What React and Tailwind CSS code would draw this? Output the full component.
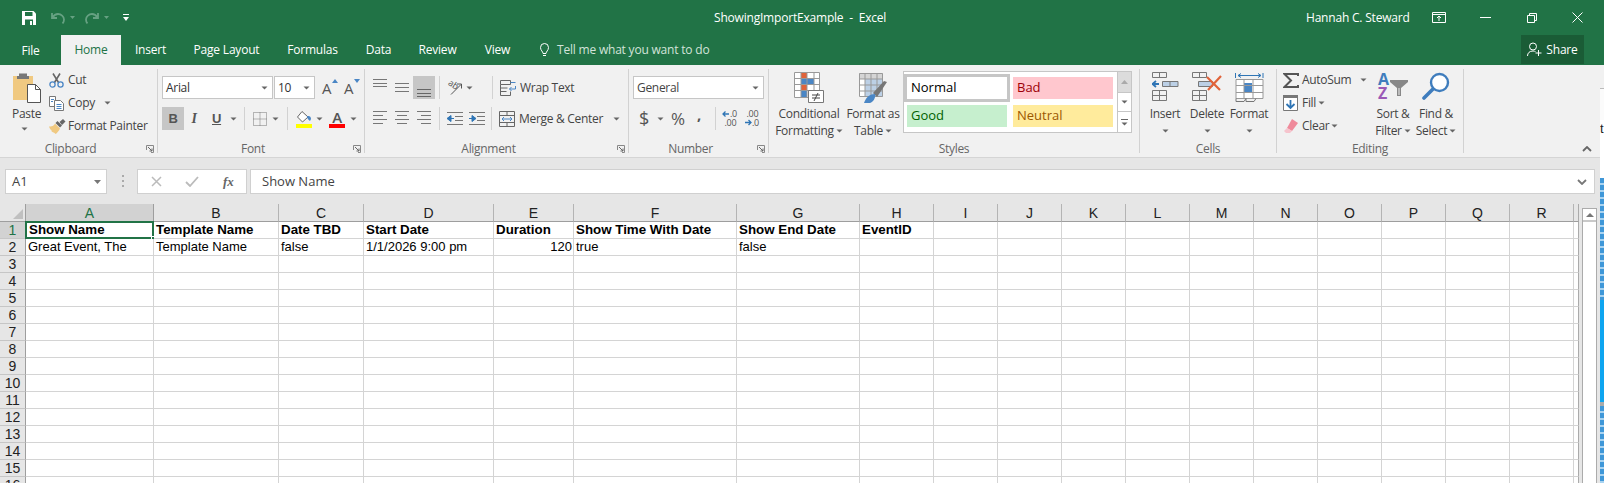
const columns = [
  ["A", "Show Name", "Great Event, The"],
  ["B", "Template Name", "Template Name"],
  ["C", "Date TBD", "false"],
  ["D", "Start Date", "1/1/2026 9:00 pm"],
  ["E", "Duration", "120"],
  ["F", "Show Time With Date", "true"],
  ["G", "Show End Date", "false"],
  ["H", "EventID", ""],
  ["I", "", ""],
  ["J", "", ""],
  ["K", "", ""],
  ["L", "", ""],
  ["M", "", ""],
  ["N", "", ""],
  ["O", "", ""],
  ["P", "", ""],
  ["Q", "", ""],
  ["R", "", ""],
];

const rows = Array.from({ length: 16 }, (_, i) => i + 1);

const tabs = [
  ["Insert", "w-[59px]"],
  ["Page Layout", "w-[93px]"],
  ["Formulas", "w-[79px]"],
  ["Data", "w-[53px]"],
  ["Review", "w-[65px]"],
  ["View", "w-[55px]"],
];

function Caret({ className = "" }) {
  return (
    <svg width="7" height="4" viewBox="0 0 7 4" className={`shrink-0 ${className}`}>
      <path d="M.5 .5h6L3.500 3.500z" fill="#666" />
    </svg>
  );
}

function Lines({ ys, x = [[0, 14]], w = 14, h = 23, color = "#777" }) {
  return (
    <svg width={w} height={h} viewBox={`0 0 ${w} ${h}`} className="shrink-0">
      {ys.map((y, i) => {
        const [a, b] = x[i % x.length];
        return <path key={i} d={`M${a} ${y + 0.5}H${b}`} stroke={color} />;
      })}
    </svg>
  );
}

function Launcher() {
  return (
    <svg width="8" height="8" viewBox="0 0 8 8" className="absolute right-[3px] bottom-[4px]">
      <path d="M.5 5V.5H7.500V7.500H5" fill="none" stroke="#888" />
      <path d="M2 2l4 4M6 3.500V6H3.500" fill="none" stroke="#666" />
    </svg>
  );
}

function Sep({ className = "h-[23px]" }) {
  return <div className={`w-px bg-[#d2d2d2] shrink-0 ${className}`} />;
}

function Group({ label, width, launcher, children }) {
  return (
    <div className={`relative flex flex-col shrink-0 ${width}`}>
      <div className="h-[76px]">{children}</div>
      <div className={`h-[16px] text-center leading-[16px] text-[#666] ${launcher ? "pr-[16px]" : ""}`}>{label}</div>
      {launcher && <Launcher />}
    </div>
  );
}

function PasteIcon() {
  return (
    <svg width="28" height="30" viewBox="0 0 28 30">
      <path d="M0 3h20v24H0z" fill="#f0c981" />
      <path d="M6 3h8V0.500h-8zM4 3h12v3H4z" fill="#777" />
      <path d="M14.500 11.500h8l5 5v13h-13z" fill="#fff" stroke="#555" />
      <path d="M22.500 11.500v5h5" fill="none" stroke="#555" />
    </svg>
  );
}

function CutIcon() {
  return (
    <svg width="15" height="15" viewBox="0 0 15 15">
      <path d="M4 0.500l5.500 9M11 0.500L5.500 9.500" stroke="#666" strokeWidth="1.600" fill="none" />
      <circle cx="3.500" cy="11.500" r="2.600" fill="none" stroke="#4a86c5" strokeWidth="1.300" />
      <circle cx="11.500" cy="11.500" r="2.600" fill="none" stroke="#4a86c5" strokeWidth="1.300" />
    </svg>
  );
}

function CopyIcon() {
  return (
    <svg width="15" height="15" viewBox="0 0 15 15">
      <path d="M.5 .5h6v10h-6z" fill="#fff" stroke="#777" />
      <path d="M5.500 4.500h6l3 3v7h-9z" fill="#fff" stroke="#777" />
      <path d="M7.500 8.500h5M7.500 10.500h5M7.500 12.500h5M2 3.500h3M2 5.500h2" stroke="#4a86c5" />
    </svg>
  );
}

function PainterIcon() {
  return (
    <svg width="17" height="15" viewBox="0 0 17 15">
      <path d="M0 7.500c3 .5 5-1 6-3l5 5c-1 2-3 5-4.500 5.500-1-1.500-1.500-1-3-2-1.500-.5-1-2-1-2-1 0-2-2-2.500-3.500z" fill="#f0c981" />
      <path d="M6.500 4l2-2 4.500 4.500-2 2zM10.500 3l3.500-3 2.500 2.500-3.500 3.500z" fill="#666" />
    </svg>
  );
}

function Small({ icon, children, className = "" }) {
  return (
    <div className={`flex items-center h-[23px] ${className}`}>
      <div className="w-[19px] shrink-0 flex items-center pt-[1px]">{icon}</div>
      {children}
    </div>
  );
}

function SizeA({ text, up }) {
  return (
    <div className="relative w-[14px] h-[23px] flex items-end">
      <span className="text-[15px] leading-[21px] text-[#555]">{text}</span>
      <svg width="6" height="4" viewBox="0 0 6 4" className="absolute right-[-2px] top-[3px]">
        <path d={up ? "M0 4h6L3 0z" : "M0 0h6L3 4z"} fill="#4a86c5" />
      </svg>
    </div>
  );
}

function BordersIcon() {
  return (
    <svg width="14" height="14" viewBox="0 0 14 14">
      <path d="M.5 .5h13v13H.5zM7 .5v13M.5 7h13" fill="none" stroke="#777" strokeDasharray="1 1" />
    </svg>
  );
}

function FillIcon() {
  return (
    <svg width="17" height="18" viewBox="0 0 17 18">
      <path d="M7 1.500L2.500 7l5 5L13 7z" fill="#fff" stroke="#666" />
      <path d="M12 6.500c2-1 4 0 4 2.500l-1 2c-1-1-3-2-3-4.500z" fill="#4a86c5" />
      <path d="M1 14h16v4H1z" fill="#ffff00" />
    </svg>
  );
}

function FontColorIcon() {
  return (
    <div className="flex flex-col items-center w-[16px]">
      <span className="text-[15px] leading-[14px] font-semibold text-[#555]">A</span>
      <div className="w-[16px] h-[4px] bg-[#ff0000]" />
    </div>
  );
}

function OrientationIcon() {
  return (
    <svg width="16" height="17" viewBox="0 0 16 17" className="overflow-visible">
      <text x="1" y="8" fontSize="9" fill="#555" fontFamily="Open Sans" transform="rotate(35 5 6)">ab</text>
      <path d="M4 15.500L14 5.500M10 5h4.500v4.500" fill="none" stroke="#555" />
    </svg>
  );
}

function WrapIcon() {
  return (
    <svg width="16" height="16" viewBox="0 0 16 16">
      <path d="M.5 .5h10v4h-10zM.5 4.500v11h10v-4M.5 8h7M.5 11.500h6" fill="none" stroke="#666" />
      <path d="M10.500 2.500h5" stroke="#4a86c5" />
      <path d="M15.500 6v3h-6M11.500 7l-2 2 2 2" fill="none" stroke="#4a86c5" />
    </svg>
  );
}

function MergeIcon() {
  return (
    <svg width="16" height="16" viewBox="0 0 16 16">
      <path d="M.5 .5h15v15H.5zM.5 4.500h15M.5 11.500h15M8 .5v4M8 11.500v4" fill="none" stroke="#666" />
      <path d="M3 8h10M5 6L3 8l2 2M11 6l2 2-2 2" fill="none" stroke="#4a86c5" />
    </svg>
  );
}

function IndentIcon({ flip }) {
  return (
    <svg width="16" height="14" viewBox="0 0 16 14">
      <path d="M0 .5h16M8 4.500h8M8 8.500h8M0 12.500h16" stroke="#777" fill="none" />
      <path d={flip ? "M0 6.500h3M3 3.500l4 3-4 3z" : "M3 6.500h4M4 3.500L0 6.500l4 3z"} stroke="#2f75b5" fill="#2f75b5" />
    </svg>
  );
}

function DecimalIcon({ top, bottom, dir }) {
  return (
    <svg width="15" height="17" viewBox="0 0 15 17" className="overflow-visible">
      <text x={top.length === 2 ? 7 : 1.500} y="7" fontSize="9" fill="#555" fontFamily="Open Sans">{top}</text>
      <text x={bottom.length === 2 ? 7 : 1.500} y="16" fontSize="9" fill="#555" fontFamily="Open Sans">{bottom}</text>
      <path d={dir === "left" ? "M0 4h6M2.500 1.500L0 4l2.500 2.500" : "M0 12.500h6M3.500 10L6 12.500 3.500 15"} fill="none" stroke="#2f75b5" strokeWidth="1.300" />
    </svg>
  );
}

function ConditionalIcon() {
  return (
    <svg width="30" height="31" viewBox="0 0 30 31">
      <path d="M0 0h26v26H0z" fill="#fff" />
      <path d="M7 0h6v6H7z M7 12h6v6H7z" fill="#e0633a" />
      <path d="M7 6h13v6H7z M7 18h6v8H7z" fill="#4a86c5" />
      <path d="M.5 .5h25v25H.5zM7 .5v25M13 .5v25M20 .5v25M.5 6.500h25M.5 12.500h25M.5 18.500h25" fill="none" stroke="#999" />
      <path d="M14.500 18.500h15v12h-15z" fill="#fff" stroke="#777" />
      <path d="M18 23h8M18 26h8M24 21l-4 8" stroke="#444" fill="none" />
    </svg>
  );
}

function TableIcon() {
  return (
    <svg width="30" height="31" viewBox="0 0 30 31">
      <path d="M1 1h24v24H1z" fill="#fff" />
      <path d="M7 7h18v18H7z" fill="#bcd0e6" />
      <path d="M1 1h24v6H1z" fill="#d5d5d5" />
      <path d="M1.500 1.500h23v23h-23zM7 1.500v23M13 1.500v23M19 1.500v23M1.500 7h23M1.500 13h23M1.500 19h23" fill="none" stroke="#999" />
      <path d="M15 21L26 9l3 1-6 9-4 6z" fill="#777" />
      <path d="M6 31c2-6 6-9 11-9 1 4-2 8-5 9z" fill="#4a86c5" />
    </svg>
  );
}

function StyleCell({ bg, color, children, extra = "" }) {
  return <div className={`h-[22px] flex items-center pl-[4px] text-[13px] ${bg} ${color} ${extra}`}>{children}</div>;
}

function InsertIcon() {
  return (
    <svg width="27" height="29" viewBox="0 0 27 29">
      <path d="M.5 .5h14v5h-14zM7.500 .5v5M.5 18.500h14v10h-14zM.5 23.500h14M7.500 18.500v10" fill="none" stroke="#777" />
      <path d="M10.500 9.500h15.500v5H10.500z" fill="#bcd0e6" stroke="#777" />
      <path d="M18 9.500v5" stroke="#777" />
      <path d="M0 12h7M4 9l-3.500 3L4 15" fill="none" stroke="#2f75b5" strokeWidth="1.800" />
    </svg>
  );
}

function DeleteIcon() {
  return (
    <svg width="31" height="29" viewBox="0 0 31 29">
      <path d="M.5 .5h14v5h-14zM7.500 .5v5M.5 18.500h14v10h-14zM.5 23.500h14M7.500 18.500v10" fill="none" stroke="#777" />
      <path d="M6.500 9.500h14v5h-14z" fill="#bcd0e6" stroke="#777" />
      <path d="M15 5l13 13M29 4L16 18" stroke="#e0633a" strokeWidth="2.200" fill="none" />
    </svg>
  );
}

function FormatIcon() {
  return (
    <svg width="29" height="31" viewBox="0 0 29 31">
      <path d="M.5 1v5M28 1v5" stroke="#2f75b5" fill="none" />
      <path d="M3 3.500h23M6 1.500l-3 2 3 2M23 1.500l3 2-3 2" stroke="#2f75b5" fill="none" />
      <path d="M1 7.500h27v19H1z" fill="#fff" />
      <path d="M9 11h8v10H9z" fill="#4a86c5" />
      <path d="M1 7.500h27v19H1zM9 7.500v19M18 7.500v19M1 13.500h27M1 20.500h27" fill="none" stroke="#999" />
      <path d="M1 26.500v3h8l2-3M11 26.500v3h8l2-3" fill="none" stroke="#777" />
    </svg>
  );
}

function SigmaIcon() {
  return (
    <svg width="16" height="15" viewBox="0 0 16 15">
      <path d="M15 3V1H1.500L8 7.500 1.500 14H15v-2" fill="none" stroke="#555" strokeWidth="2" />
    </svg>
  );
}

function DownIcon() {
  return (
    <svg width="15" height="16" viewBox="0 0 15 16">
      <path d="M.5 .5h14v15H.5z" fill="#fff" stroke="#777" />
      <path d="M0 0h15v3H0z" fill="#777" />
      <path d="M7.500 5v8M3.500 9l4 4 4-4" fill="none" stroke="#2f75b5" strokeWidth="1.800" />
    </svg>
  );
}

function EraserIcon() {
  return (
    <svg width="15" height="14" viewBox="0 0 15 14">
      <path d="M9 0l6 4-6 8-5-3z" fill="#ef8a9b" />
      <path d="M4 9l5 3-2 2H3L1 12z" fill="#f6c4cd" />
    </svg>
  );
}

function SortIcon() {
  return (
    <div className="relative w-[30px] h-[29px]">
      <span className="absolute left-0 top-0 font-bold text-[16px] leading-[14px] text-[#3f7dbd]">A</span>
      <span className="absolute left-0 top-[14px] font-bold text-[16px] leading-[14px] text-[#9b59b6]">Z</span>
      <svg width="18" height="17" viewBox="0 0 18 17" className="absolute right-0 top-[8px]">
        <path d="M0 0h18v2l-7 6v8H7V8L0 2z" fill="#888" />
        <path d="M8.500 8v7h1V8z" fill="#eee" />
      </svg>
    </div>
  );
}

function FindIcon() {
  return (
    <svg width="28" height="28" viewBox="0 0 28 28">
      <circle cx="17.500" cy="10.500" r="8.500" fill="#fff" stroke="#3f7dbd" strokeWidth="2.400" />
      <path d="M11 17L2 26" stroke="#3f7dbd" strokeWidth="3.600" strokeLinecap="round" />
    </svg>
  );
}

function BigButton({ icon, line1, line2, width, caret }) {
  return (
    <div className={`flex flex-col items-center pt-[7px] shrink-0 ${width}`}>
      <div className="h-[34px] flex items-start justify-center">{icon}</div>
      <div className="h-[17px] leading-[16px] whitespace-nowrap">{line1}</div>
      <div className="h-[16px] flex items-center gap-[2px] whitespace-nowrap leading-[16px]">
        {line2}
        {caret && <Caret />}
      </div>
    </div>
  );
}

function TitleBar() {
  return (
    <div className="h-[35px] flex items-center text-white">
      <div className="w-[714px] flex items-center pl-[22px] shrink-0">
        <svg width="14" height="14" viewBox="0 0 14 14">
          <path d="M0 0h11.500L14 2.500V14H0z" fill="#fff" />
          <path d="M3 1h7.500v4H3zM3 8.500h8V14H3z" fill="#217346" />
          <path d="M8 10h2v4H8z" fill="#fff" />
        </svg>
        <svg width="14" height="12" viewBox="0 0 14 12" className="ml-[15px]">
          <path d="M1 1v5h5M1.500 5.500C3 3 5 2 7 2c3 0 6 2.500 6 5.500 0 1.500-.5 3-1.500 4" fill="none" stroke="#66a182" strokeWidth="1.800" />
        </svg>
        <svg width="5" height="3" viewBox="0 0 5 3" className="ml-[5px]"><path d="M0 0h5L2.500 3z" fill="#66a182" /></svg>
        <svg width="14" height="12" viewBox="0 0 14 12" className="ml-[10px]">
          <path d="M13 1v5H8M12.500 5.500C11 3 9 2 7 2 4 2 1 4.500 1 7.500 1 9 1.500 10.500 2.500 11.500" fill="none" stroke="#66a182" strokeWidth="1.800" />
        </svg>
        <svg width="5" height="3" viewBox="0 0 5 3" className="ml-[5px]"><path d="M0 0h5L2.500 3z" fill="#66a182" /></svg>
        <svg width="6" height="7" viewBox="0 0 6 7" className="ml-[14px]"><path d="M0 0h6v1H0zM0 3h6L3 7z" fill="#fff" /></svg>
      </div>
      <div className="w-[592px] shrink-0 whitespace-pre">ShowingImportExample  -  Excel</div>
      <div className="w-[126px] shrink-0">Hannah C. Steward</div>
      <svg width="14" height="11" viewBox="0 0 14 11" className="shrink-0">
        <path d="M.5 .5h13v10H.5zM.5 2.500h13M7 9V4.500M5 6l2-2 2 2" fill="none" stroke="#fff" />
      </svg>
      <div className="ml-[34px] w-[11px] h-px bg-white shrink-0" />
      <svg width="10" height="10" viewBox="0 0 10 10" className="ml-[36px] shrink-0">
        <path d="M.5 2.500h7v7h-7zM2.500 2.500v-2h7v7h-2" fill="none" stroke="#fff" />
      </svg>
      <svg width="11" height="11" viewBox="0 0 11 11" className="ml-[35px] shrink-0">
        <path d="M.5 .5l10 10M10.500 .5l-10 10" stroke="#fff" fill="none" />
      </svg>
    </div>
  );
}

function TabRow() {
  return (
    <div className="h-[30px] flex items-stretch text-white">
      <div className="w-[61px] flex items-center justify-center pt-[1px]">File</div>
      <div className="w-[60px] flex items-center justify-center bg-[#f1f1f1] text-[#217346]">Home</div>
      {tabs.map(([name, width]) => (
        <div key={name} className={`flex items-center justify-center ${width}`}>{name}</div>
      ))}
      <div className="ml-[15px] flex items-center gap-[8px] text-[#d3e3da]">
        <svg width="9" height="14" viewBox="0 0 9 14">
          <path d="M3 10.500C3 8.500 .5 7.500 .5 4.500a4 4 0 0 1 8 0c0 3-2.500 4-2.500 6zM3 12.500h3" fill="none" stroke="#fff" />
        </svg>
        Tell me what you want to do
      </div>
      <div className="ml-auto mr-[20px] w-[63px] h-[29px] bg-[#1a5c36] flex items-center justify-center gap-[4px]">
        <svg width="15" height="15" viewBox="0 0 15 15">
          <circle cx="6" cy="4.500" r="3.500" fill="none" stroke="#fff" />
          <path d="M.5 14c0-3 2-5 5.500-5 1 0 2 .3 2.500.6M11.500 8v6M8.500 11h6" fill="none" stroke="#fff" />
        </svg>
        Share
      </div>
    </div>
  );
}

function Ribbon() {
  return (
    <div className="h-[93px] bg-[#f1f1f1] border-b border-[#d5d5d5] flex text-[#444] tracking-[-0.3px]">
      <Group label="Clipboard" width="w-[157px]" launcher>
        <div className="flex">
          <div className="ml-[11px] w-[31px] flex flex-col items-start pt-[8px]">
            <div className="ml-[2px]"><PasteIcon /></div>
            <div className="leading-[16px] mt-[3px] ml-[1px]">Paste</div>
            <Caret className="mt-[5px] ml-[10px]" />
          </div>
          <div className="ml-[7px] pt-[3px] flex flex-col">
            <Small icon={<CutIcon />}>Cut</Small>
            <Small icon={<CopyIcon />}>
              Copy
              <Caret className="ml-[9px]" />
            </Small>
            <Small icon={<PainterIcon />}>Format Painter</Small>
          </div>
        </div>
      </Group>
      <Sep className="h-[84px] mt-[4px]" />
      <Group label="Font" width="w-[206px]" launcher>
        <div className="pl-[4px] pt-[11px] flex flex-col gap-[8px]">
          <div className="flex items-center h-[23px]">
            <div className="w-[111px] h-[23px] bg-white border border-[#c6c6c6] flex items-center justify-between pl-[3px] pr-[4px]">
              <span className="text-[#333]">Arial</span>
              <Caret />
            </div>
            <div className="w-[41px] h-[23px] ml-px bg-white border border-[#c6c6c6] flex items-center justify-between pl-[3px] pr-[4px]">
              <span className="text-[#333]">10</span>
              <Caret />
            </div>
            <div className="ml-[7px]"><SizeA text="A" up /></div>
            <div className="ml-[8px]"><SizeA text="A" /></div>
          </div>
          <div className="flex items-center h-[23px]">
            <div className="w-[22px] h-[23px] bg-[#c6c6c6] flex items-center justify-center font-bold font-['Liberation_Sans',sans-serif] text-[13px] text-[#555]">B</div>
            <div className="w-[8px] ml-[6px] text-center italic font-['Liberation_Serif',serif] font-bold text-[14px] text-[#555]">I</div>
            <div className="w-[8px] ml-[14px] text-center underline font-bold font-['Liberation_Sans',sans-serif] text-[13px] text-[#555]">U</div>
            <Caret className="ml-[10px]" />
            <div className="ml-[7px]"><Sep /></div>
            <div className="ml-[8px]"><BordersIcon /></div>
            <Caret className="ml-[5px]" />
            <div className="ml-[8px]"><Sep /></div>
            <div className="ml-[7px]"><FillIcon /></div>
            <Caret className="ml-[4px]" />
            <div className="ml-[6px]"><FontColorIcon /></div>
            <Caret className="ml-[5px]" />
          </div>
        </div>
      </Group>
      <Sep className="h-[84px] mt-[4px]" />
      <Group label="Alignment" width="w-[263px]" launcher>
        <div className="pl-[8px] pt-[11px] flex flex-col gap-[8px]">
          <div className="flex items-center h-[23px]">
            <Lines ys={[3, 7, 10]} x={[[0, 14]]} />
            <div className="ml-[8px]"><Lines ys={[7, 11, 15]} /></div>
            <div className="ml-[4px] w-[22px] h-[23px] bg-[#c6c6c6] flex justify-center"><Lines ys={[13, 17, 20]} color="#666" /></div>
            <div className="ml-[4px]"><Sep /></div>
            <div className="ml-[7px]"><OrientationIcon /></div>
            <Caret className="ml-[3px]" />
            <div className="ml-[19px]"><Sep /></div>
            <div className="ml-[7px]"><WrapIcon /></div>
            <span className="ml-[4px]">Wrap Text</span>
          </div>
          <div className="flex items-center h-[23px]">
            <Lines ys={[4, 8, 12, 16]} x={[[0, 14], [0, 10]]} />
            <div className="ml-[8px]"><Lines ys={[4, 8, 12, 16]} x={[[0, 14], [2, 12]]} /></div>
            <div className="ml-[8px]"><Lines ys={[4, 8, 12, 16]} x={[[0, 14], [4, 14]]} /></div>
            <div className="ml-[8px]"><Sep /></div>
            <div className="ml-[7px]"><IndentIcon /></div>
            <div className="ml-[6px]"><IndentIcon flip /></div>
            <div className="ml-[6px]"><Sep /></div>
            <div className="ml-[7px]"><MergeIcon /></div>
            <span className="ml-[4px] w-[92px] whitespace-nowrap">Merge &amp; Center</span>
            <Caret className="ml-[2px]" />
          </div>
        </div>
      </Group>
      <Sep className="h-[84px] mt-[4px]" />
      <Group label="Number" width="w-[139px]" launcher>
        <div className="pl-[4px] pt-[11px] flex flex-col gap-[8px]">
          <div className="w-[131px] h-[23px] bg-white border border-[#c6c6c6] flex items-center justify-between pl-[3px] pr-[4px]">
            <span>General</span>
            <Caret />
          </div>
          <div className="flex items-center h-[23px] -ml-[4px]">
            <span className="ml-[9px] w-[12px] text-center text-[18px] text-[#555]">$</span>
            <Caret className="ml-[7px]" />
            <span className="ml-[6px] w-[16px] text-center text-[17px] text-[#555]">%</span>
            <span className="ml-[10px] w-[6px] text-center text-[15px] font-bold leading-[15px] text-[#555] -mt-[8px]">,</span>
            <div className="ml-[13px]"><Sep /></div>
            <div className="ml-[7px]"><DecimalIcon top=".0" bottom=".00" dir="left" /></div>
            <div className="ml-[7px]"><DecimalIcon top=".00" bottom=".0" dir="right" /></div>
          </div>
        </div>
      </Group>
      <Sep className="h-[84px] mt-[4px]" />
      <Group label="Styles" width="w-[370px]">
        <div className="flex">
          <div className="ml-[6px]">
            <BigButton icon={<ConditionalIcon />} line1="Conditional" line2="Formatting" caret width="w-[68px]" />
          </div>
          <div className="ml-[4px]">
            <BigButton icon={<TableIcon />} line1="Format as" line2="Table" caret width="w-[52px]" />
          </div>
          <div className="ml-[4px] mt-[6px] w-[229px] h-[62px] bg-white border border-[#c6c6c6] flex tracking-normal">
            <div className="grid grid-cols-[100px_100px] content-start gap-[6px] pl-[3px] pt-[5px]">
              <StyleCell bg="bg-white" color="text-black" extra="outline-[3px] outline-solid outline-[#c6c6c6]">Normal</StyleCell>
              <StyleCell bg="bg-[#ffc7ce]" color="text-[#9c0006]">Bad</StyleCell>
              <StyleCell bg="bg-[#c6efce]" color="text-[#006100]">Good</StyleCell>
              <StyleCell bg="bg-[#ffeb9c]" color="text-[#9c5700]">Neutral</StyleCell>
            </div>
            <div className="ml-[4px] w-[15px] flex flex-col border-l border-[#c6c6c6]">
              <div className="h-[21px] bg-[#dcdcdc] border-b border-[#c6c6c6] flex items-center justify-center">
                <svg width="7" height="4" viewBox="0 0 7 4"><path d="M0 4h7L3.500 0z" fill="#aaa" /></svg>
              </div>
              <div className="h-[19px] border-b border-[#c6c6c6] flex items-center justify-center"><Caret /></div>
              <div className="flex-1 flex flex-col items-center justify-center gap-[2px]">
                <div className="w-[7px] h-px bg-[#666]" />
                <Caret />
              </div>
            </div>
          </div>
        </div>
      </Group>
      <Sep className="h-[84px] mt-[4px]" />
      <Group label="Cells" width="w-[136px]">
        <div className="flex pl-[8px]">
          <BigButton icon={<InsertIcon />} line1="Insert" line2="" caret width="w-[34px]" />
          <BigButton icon={<DeleteIcon />} line1="Delete" line2="" caret width="w-[50px]" />
          <BigButton icon={<FormatIcon />} line1="Format" line2="" caret width="w-[34px]" />
        </div>
      </Group>
      <Sep className="h-[84px] mt-[4px]" />
      <Group label="Editing" width="w-[186px]">
        <div className="flex pl-[6px]">
          <div className="w-[92px] pt-[3px] flex flex-col shrink-0">
            <Small icon={<SigmaIcon />}>
              AutoSum
              <Caret className="ml-[9px]" />
            </Small>
            <Small icon={<DownIcon />}>
              Fill
              <Caret className="ml-[2px]" />
            </Small>
            <Small icon={<EraserIcon />}>
              Clear
              <Caret className="ml-[2px]" />
            </Small>
          </div>
          <BigButton icon={<SortIcon />} line1="Sort &" line2="Filter" caret width="w-[36px]" />
          <div className="ml-[3px]">
            <BigButton icon={<FindIcon />} line1="Find &" line2="Select" caret width="w-[44px]" />
          </div>
        </div>
      </Group>
      <Sep className="h-[84px] mt-[4px]" />
      <div className="flex-1 flex items-end justify-end pr-[8px] pb-[5px]">
        <svg width="10" height="6" viewBox="0 0 10 6">
          <path d="M1 5l4-4 4 4" fill="none" stroke="#666" strokeWidth="1.800" />
        </svg>
      </div>
    </div>
  );
}

function FormulaBar() {
  return (
    <div className="h-[46px] pt-[11px] flex items-start">
      <div className="ml-[5px] w-[102px] h-[25px] bg-white border border-[#d0d0d0] flex items-center justify-between pl-[6px] pr-[4px] text-[13px] text-[#444]">
        A1
        <svg width="7" height="4" viewBox="0 0 7 4" className="mr-[1px]"><path d="M0 0h7L3.500 4z" fill="#777" /></svg>
      </div>
      <div className="ml-[14px] w-[3px] h-[12px] mt-[6px] flex flex-col justify-between items-center">
        <div className="w-[2px] h-[2px] bg-[#aaa]" />
        <div className="w-[2px] h-[2px] bg-[#aaa]" />
        <div className="w-[2px] h-[2px] bg-[#aaa]" />
      </div>
      <div className="ml-[13px] w-[110px] h-[25px] bg-white border border-[#d0d0d0] flex items-center">
        <svg width="11" height="11" viewBox="0 0 11 11" className="ml-[13px]">
          <path d="M1 1l9 9M10 1l-9 9" stroke="#bbb" strokeWidth="1.500" />
        </svg>
        <svg width="14" height="11" viewBox="0 0 14 11" className="ml-[23px]">
          <path d="M1 6l4 4 8-9" fill="none" stroke="#bbb" strokeWidth="1.800" />
        </svg>
        <span className="ml-[24px] italic font-bold font-['Liberation_Serif',serif] text-[13px] text-[#666]">fx</span>
      </div>
      <div className="ml-[3px] w-[1345px] h-[25px] bg-white border border-[#d0d0d0] flex items-center justify-between pl-[11px] pr-[7px] text-[13px] text-[#444]">
        Show Name
        <svg width="10" height="6" viewBox="0 0 10 6">
          <path d="M1 1l4 4 4-4" fill="none" stroke="#777" strokeWidth="1.800" />
        </svg>
      </div>
    </div>
  );
}

function Sheet() {
  return (
    <div className="flex-1 flex items-start overflow-hidden font-['Liberation_Sans',Arial,sans-serif] text-[13px] text-black">
      <div className="w-[1579px] shrink-0 grid grid-cols-[26px_128px_125px_85px_130px_80px_163px_123px_74px_repeat(10,64px)_5px] grid-rows-[18px_repeat(16,17px)]">
        <div className="border-r border-b border-[#9e9e9e] bg-[#e6e6e6] relative">
          <svg width="10" height="10" viewBox="0 0 10 10" className="absolute right-[2px] bottom-[2px]">
            <path d="M10 0v10H0z" fill="#c0c0c0" />
          </svg>
        </div>
        {columns.map(([letter]) => (
          <div
            key={letter}
            className={`flex items-center justify-center border-b border-b-[#9e9e9e] text-[14px] leading-[16px] ${
              letter === "A"
                ? "bg-[#d2d2d2] text-[#217346] border-r border-r-[#9e9e9e]"
                : "text-[#222] border-r border-r-[#b4b4b4]"
            }`}
          >
            {letter}
          </div>
        ))}
        <div className="border-b border-b-[#9e9e9e] border-r border-r-[#ababab]" />
        {rows.map((row) => (
          <div key={row} className="contents">
            <div
              className={`flex items-center justify-center border-r border-r-[#9e9e9e] border-b border-b-[#c6c6c6] text-[14px] leading-[16px] ${
                row === 1 ? "bg-[#d2d2d2] text-[#217346]" : "bg-[#e6e6e6] text-[#222]"
              }`}
            >
              {row}
            </div>
            {columns.map((col, i) => {
              const text = row === 1 ? col[1] : row === 2 ? col[2] : "";
              const isSelected = row === 1 && i === 0;
              return (
                <div
                  key={col[0]}
                  className={`relative bg-white border-r border-b border-[#d4d4d4] leading-[16px] whitespace-nowrap overflow-visible ${
                    row === 1 ? "font-bold text-[13.33px]" : ""
                  } ${isSelected ? "pl-[3px]" : "pl-[2px]"} ${text === "120" ? "text-right pr-[1px]" : ""}`}
                >
                  {text}
                  {isSelected && (
                    <>
                      <div className="absolute left-[-1px] top-[-1px] w-[129px] h-[18px] border-2 border-[#217346]" />
                      <div className="absolute right-[-3px] bottom-[-3px] w-[5px] h-[5px] bg-[#217346] border border-white" />
                    </>
                  )}
                </div>
              );
            })}
            <div className="bg-white border-b border-b-[#d4d4d4] border-r border-r-[#ababab]" />
          </div>
        ))}
      </div>
      <div className="ml-[3px] mt-[4px] w-[15px] h-[300px] bg-white border border-[#ababab] shrink-0">
        <div className="h-[13px] border-b-2 border-[#c9c9c9] flex items-center justify-center">
          <svg width="8" height="4" viewBox="0 0 8 4"><path d="M0 4h8L4 0z" fill="#777" /></svg>
        </div>
      </div>
    </div>
  );
}

function EdgeStrip() {
  return (
    <div className="w-[4px] shrink-0 flex flex-col overflow-hidden bg-white">
      <div className="h-[23px] bg-[#f1f1f1]" />
      <div className="h-[32px] bg-[#fbfbfb] border-t border-[#bbb]" />
      <div className="h-[25px] text-[13px] leading-[16px] pt-[1px] text-[#222] font-['Liberation_Sans',sans-serif]">t</div>
      <div className="h-[33px] bg-white" />
      <div className="h-[122px] bg-[repeating-linear-gradient(180deg,#3f97d8_0px,#3f97d8_5px,#a9d3f0_5px,#a9d3f0_7px)]" />
      <div className="h-[102px] bg-[#0ea5f0]" />
      <div className="h-[4px] bg-[#aaa]" />
      <div className="flex-1 bg-[repeating-linear-gradient(180deg,#3f97d8_0px,#3f97d8_5px,#a9d3f0_5px,#a9d3f0_7px)]" />
    </div>
  );
}

export default function App() {
  return (
    <div className="w-[1604px] h-[483px] overflow-hidden flex flex-col bg-[#217346] font-['Open_Sans',sans-serif] text-[12px] tracking-[-0.2px]">
      <TitleBar />
      <TabRow />
      <div className="flex-1 flex min-h-0">
        <div className="w-[1600px] shrink-0 flex flex-col bg-[#e6e6e6] tracking-normal">
          <Ribbon />
          <FormulaBar />
          <Sheet />
        </div>
        <EdgeStrip />
      </div>
    </div>
  );
}
